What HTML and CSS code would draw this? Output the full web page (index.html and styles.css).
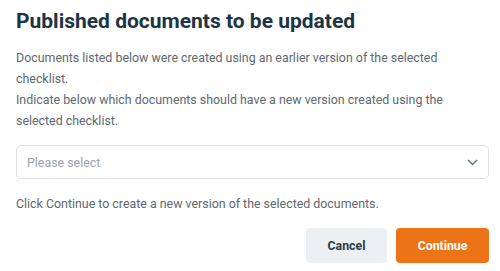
FILE: index.html
```html
<!DOCTYPE html>
<html lang="en">
<head>
<meta charset="utf-8">
<link rel="stylesheet" href="styles.css">
</head>
<body>
<div class="dialog">
  <h1 class="title">Published documents to be updated</h1>
  <p class="text">Documents listed below were created using an earlier version of the selected checklist.<br>Indicate below which documents should have a new version created using the selected checklist.</p>
  <div class="select">
    <span class="placeholder">Please select</span>
    <svg class="chevron" width="11" height="7" viewBox="0 0 11 7"><path d="M1 1l4.5 4.5L10 1" fill="none" stroke="#5f6b75" stroke-width="1.3"/></svg>
  </div>
  <p class="text hint">Click Continue to create a new version of the selected documents.</p>
  <div class="actions">
    <button class="btn btn-cancel">Cancel</button>
    <button class="btn btn-primary">Continue</button>
  </div>
</div>
</body>
</html>
```
FILE: styles.css
```css
html, body {
  margin: 0;
  padding: 0;
  background: #ffffff;
}
body {
  font-family: Roboto, "Liberation Sans", sans-serif;
}
.dialog {
  padding: 7px 11px 8px 16px;
  display: flex;
  flex-direction: column;
}
.title {
  margin: 0;
  font-size: 21px;
  line-height: 28px;
  font-weight: 700;
  color: #1e3343;
}
.text {
  margin: 12px 0 0;
  font-size: 12.4px;
  line-height: 21px;
  color: #5d6870;
  padding-right: 40px;
}
.select {
  margin-top: 14px;
  height: 34px;
  box-sizing: border-box;
  border: 1px solid #dfe3e6;
  border-radius: 5px;
  display: flex;
  align-items: center;
  justify-content: space-between;
  padding: 0 10px 0 10px;
}
.placeholder {
  font-size: 12.4px;
  color: #9aa4ab;
}
.chevron {
  display: block;
}
.hint {
  margin-top: 14px;
}
.actions {
  margin-top: 14px;
  display: flex;
  justify-content: flex-end;
  gap: 9px;
}
.btn {
  font-family: Roboto, "Liberation Sans", sans-serif;
  font-size: 12.3px;
  font-weight: 700;
  height: 35px;
  border: none;
  border-radius: 4px;
  padding: 0;
}
.btn-cancel {
  width: 81px;
  background: #edf0f3;
  color: #2a3b48;
}
.btn-primary {
  width: 93px;
  background: #ec7316;
  color: #ffffff;
}
```
